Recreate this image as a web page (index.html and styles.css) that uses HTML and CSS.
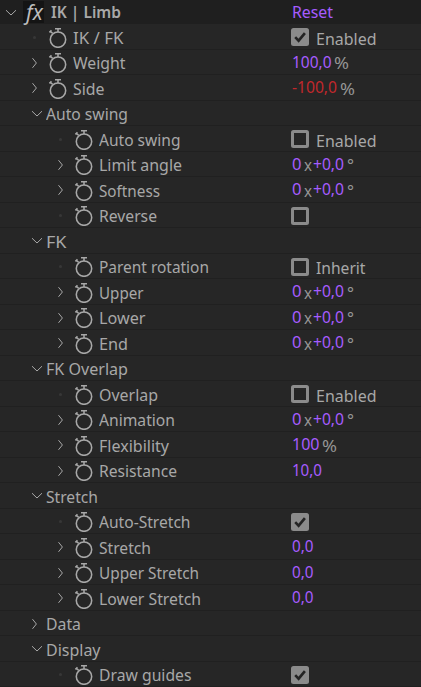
FILE: index.html
```html
<!DOCTYPE html>
<html lang="en">
<head>
<meta charset="utf-8">
<title>IK | Limb</title>
<link rel="stylesheet" href="styles.css">
</head>
<body>
<svg class="defs" aria-hidden="true">
  <symbol id="down" viewBox="0 0 12 8"><path d="M1 1.2 6 6 11 1.2"/></symbol>
  <symbol id="right" viewBox="0 0 8 12"><path d="M1.5 1.2 5.4 6 1.5 10.8"/></symbol>
  <symbol id="watch" viewBox="0 0 20 21"><circle cx="10" cy="12.6" r="7.7"/><path d="M7 1.7H13M10 1.7V5M2 3.8 4.5 6.3M1.4 5.4 3.5 3.4"/></symbol>
  <symbol id="check" viewBox="0 0 18 18"><path d="M4.2 9.2 7.6 12.7 13.9 5.1"/></symbol>
</svg>
<main class="panel" id="panel"></main>
<script src="script.js"></script>
</body>
</html>
```
FILE: styles.css
```css
* { box-sizing: border-box; }
body {
  margin: 0;
  background: #262626;
  color: #a8a8a8;
  font: 16.7px/24px "Noto Sans", "Open Sans", sans-serif;
  overflow: hidden;
}
.defs { position: absolute; width: 0; height: 0; }
svg { display: block; fill: none; stroke: #a8a8a8; }
.panel { width: 421px; height: 687px; overflow: hidden; }
.row {
  display: grid;
  grid-template-columns: 291px 1fr;
  height: 25.5px;
  border-bottom: 1px solid #202020;
}
.header { height: 24px; background: #1f1f1f; border-bottom: 0; }
.name, .value { display: flex; align-items: flex-start; min-width: 0; }
.name { padding-left: 31px; }
.nested .name { padding-left: 57px; }
.header .name { padding-left: 5px; }
.arrow { width: 15px; height: 26px; display: flex; align-items: center; flex: none; }
.header .arrow { width: 18px; height: 25px; }
.down { width: 12px; height: 8px; }
.right { width: 8px; height: 12px; }
.dot { width: 3px; height: 3px; border-radius: 50%; background: #373737; margin-left: 2px; }
.watch { width: 20px; height: 21px; margin: 2.5px 5px 0 2px; stroke-width: 1.55; flex: none; }
.text { display: inline-block; white-space: pre; transform-origin: 0 50%; flex: none; margin-top: 1.5px; }
.header .text { font-weight: 600; margin-top: 0; }
.header .value .text { font-weight: 400; }
.fx {
  width: 21px; height: 22px; margin: 1px 7px 0 0;
  padding-left: 2px;
  background: #141414; color: #bcbcbc;
  font: italic 21px/22px "Noto Sans", sans-serif;
  text-align: center;
}
.box { width: 18px; height: 18px; margin: 4px 7px 0 0; border: 3px solid #8b8b8b; border-radius: 2.5px; flex: none; }
.box.on { border: 0; background: #8b8b8b; }
.box svg { width: 18px; height: 18px; stroke: #242424; stroke-width: 2.6; }
.num { color: #a65cff; margin-top: 0; padding-left: 1px; }
.num.red { color: #c1282c; }
.unit { color: #959595; }
.option { margin-top: 2.5px; }
```
FILE: script.js
```js
const panel = document.getElementById('panel');

// Text runs are condensed to a given advance width.
const text = (s, width, cls = '') => `<span class="text ${cls}" data-w="${width}">${s}</span>`;
const icon = id => `<svg class="${id}"><use href="#${id}"/></svg>`;
const box = (on, label, width) =>
  `<span class="box ${on ? 'on' : ''}">${on ? icon('check') : ''}</span>` + (label ? text(label, width, 'option') : '');
const angle = () => text('0', 13, 'num') + text('x', 8, 'unit') + text('+0,0', 34.5, 'num') + text('°', 7, 'unit');
const zero = () => text('0,0', 22.5, 'num');

// [kind, name, name width, value]; kinds: g/c = open/closed group, p = property, n = no expander
const rows = [
  ['n', 'IK / FK', 50.5, box(1, 'Enabled', 60.5)],
  ['p', 'Weight', 52.5, text('100,0', 43, 'num') + text('%', 15, 'unit')],
  ['p', 'Side', 31.5, text('-100,0', 48.5, 'num red') + text('%', 15, 'unit')],
  ['g', 'Auto swing', 82],
  ['n', 'Auto swing', 81.5, box(0, 'Enabled', 60.5), 1],
  ['p', 'Limit angle', 83, angle(), 1],
  ['p', 'Softness', 61, angle(), 1],
  ['n', 'Reverse', 58, box(0), 1],
  ['g', 'FK', 20.5],
  ['n', 'Parent rotation', 110, box(0, 'Inherit', 49.5), 1],
  ['p', 'Upper', 44.5, angle(), 1],
  ['p', 'Lower', 46.5, angle(), 1],
  ['p', 'End', 29, angle(), 1],
  ['g', 'FK Overlap', 82],
  ['n', 'Overlap', 59, box(0, 'Enabled', 60.5), 1],
  ['p', 'Animation', 76, angle(), 1],
  ['p', 'Flexibility', 70, text('100', 31, 'num') + text('%', 15, 'unit'), 1],
  ['p', 'Resistance', 78, text('10,0', 31, 'num'), 1],
  ['g', 'Stretch', 52],
  ['n', 'Auto-Stretch', 91.5, box(1), 1],
  ['p', 'Stretch', 52, zero(), 1],
  ['p', 'Upper Stretch', 100, zero(), 1],
  ['p', 'Lower Stretch', 102, zero(), 1],
  ['c', 'Data', 35],
  ['g', 'Display', 54.5],
  ['n', 'Draw guides', 92.5, box(1), 1]
];

panel.innerHTML =
  `<div class="row header"><div class="name"><span class="arrow">${icon('down')}</span><span class="fx">fx</span>${text('IK | Limb', 70)}</div><div class="value">${text('Reset', 42, 'num')}</div></div>` +
  rows.map(([kind, name, width, value = '', nested]) => {
    const arrow = kind === 'n' ? '<i class="dot"></i>' : icon(kind === 'g' ? 'down' : 'right');
    const watch = kind === 'p' || kind === 'n' ? icon('watch') : '';
    return `<div class="row ${nested ? 'nested' : ''}"><div class="name"><span class="arrow">${arrow}</span>${watch}${text(name, width)}</div><div class="value">${value}</div></div>`;
  }).join('');

document.querySelectorAll('.text').forEach(el => {
  const natural = el.getBoundingClientRect().width;
  const target = Number(el.dataset.w);
  const gap = el.nextElementSibling && el.classList.contains('num') ? 2.5 : 0;
  el.style.transform = `scaleX(${(target - gap) / natural})`;
  el.style.width = `${natural}px`;
  el.style.marginRight = `${target - natural}px`;
});
```
